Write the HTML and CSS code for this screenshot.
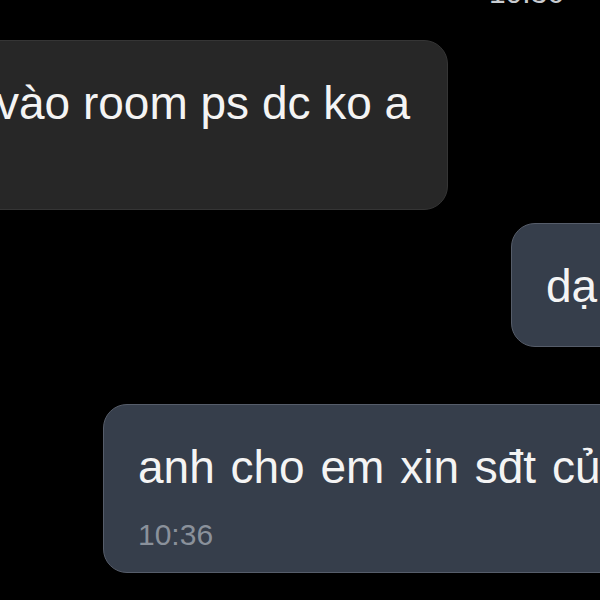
FILE: index.html
```html
<!DOCTYPE html>
<html lang="vi">
<head>
<meta charset="utf-8">
<link rel="stylesheet" href="styles.css">
</head>
<body>
<div class="chat">
  <div class="row row-time"><span class="top-time">10:36</span></div>
  <div class="row row-in">
    <div class="bubble in"><p class="text">vào room ps dc ko a</p></div>
  </div>
  <div class="row row-out1">
    <div class="bubble out short"><p class="text">dạ</p></div>
  </div>
  <div class="row row-out2">
    <div class="bubble out long">
      <p class="text">anh cho em xin sđt của</p>
      <p class="time">10:36</p>
    </div>
  </div>
</div>
</body>
</html>
```
FILE: styles.css
```css
html, body {
  margin: 0;
  padding: 0;
  background: #000;
  width: 600px;
  height: 600px;
  overflow: hidden;
  font-family: "Liberation Sans", Arial, sans-serif;
}
.chat {
  display: flex;
  flex-direction: column;
  width: 600px;
}
.row {
  display: flex;
  flex-shrink: 0;
}
.row-time {
  justify-content: flex-end;
  padding-right: 36px;
  margin-top: -22px;
  height: 30px;
}
.top-time {
  font-size: 30px;
  line-height: 30px;
  color: #c9ccd1;
}
.row-in {
  margin-top: 32px;
  margin-left: -39px;
}
.row-out1 {
  margin-top: 13px;
  padding-left: 511px;
}
.row-out2 {
  margin-top: 57px;
  padding-left: 103px;
}
.bubble {
  box-sizing: border-box;
  flex-shrink: 0;
  padding: 34px 34px 0 34px;
  border-radius: 24px;
}
.in {
  width: 487px;
  height: 170px;
  background: #272727;
  border: 1.5px solid #353535;
}
.out {
  background: #363e4b;
  border: 1.5px solid #565d6a;
}
.short {
  width: 200px;
  height: 124px;
}
.long {
  width: 700px;
  height: 169px;
}
.text {
  margin: 0;
  font-size: 46px;
  line-height: 56px;
  color: #f4f4f4;
  white-space: nowrap;
}
.long .text {
  word-spacing: 3px;
}
.time {
  margin: 22px 0 0 0;
  font-size: 30px;
  line-height: 36px;
  color: #8a919b;
}
```
